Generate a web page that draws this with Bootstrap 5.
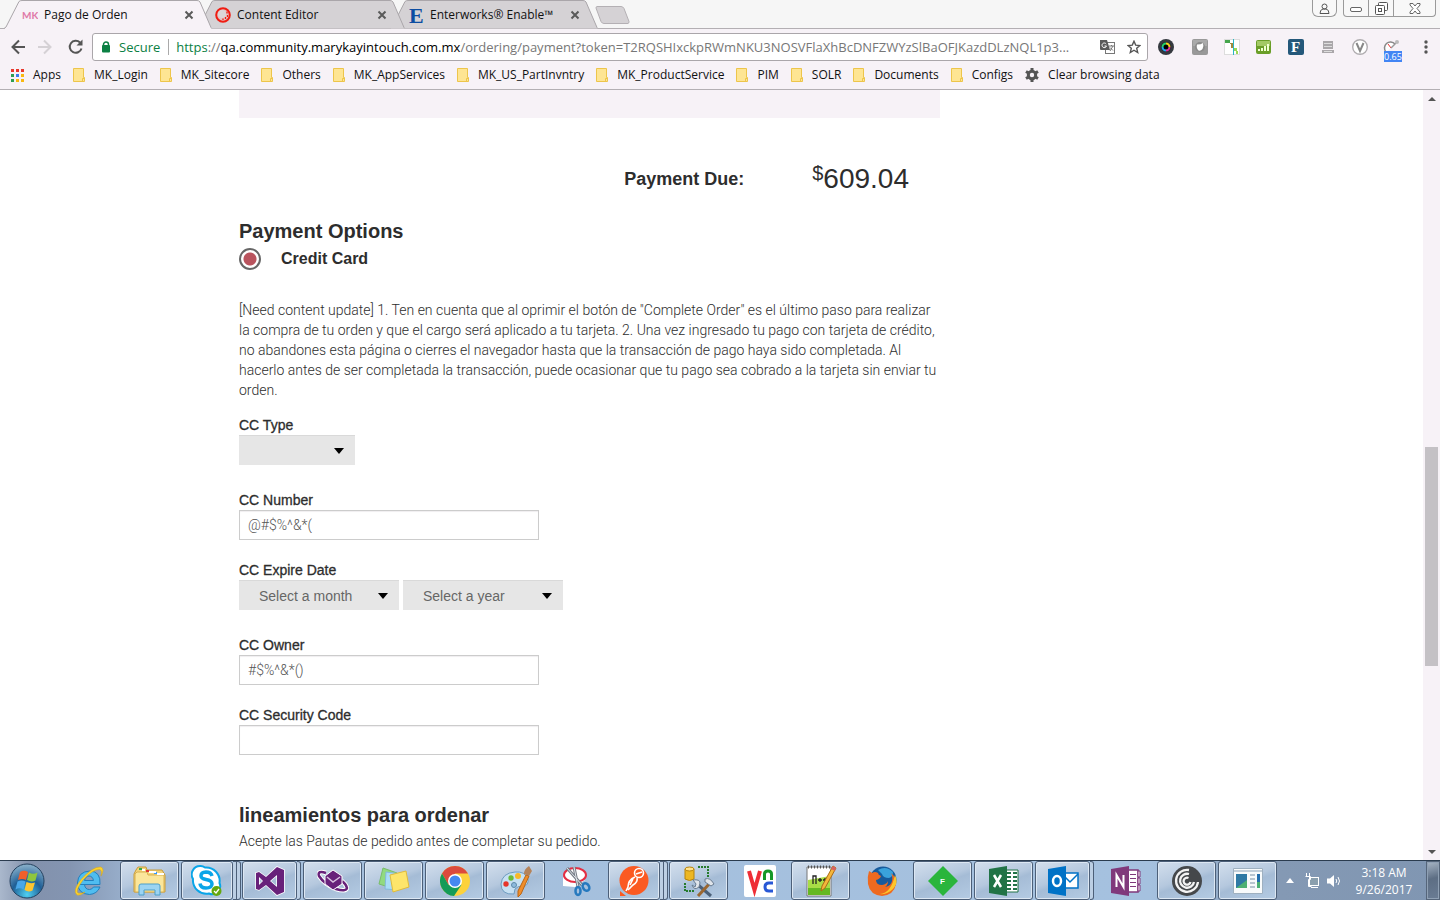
<!DOCTYPE html>
<html lang="es">
<head>
<meta charset="utf-8">
<meta name="viewport" content="width=device-width, initial-scale=1">
<title>Pago de Orden</title>
<link href="https://cdn.jsdelivr.net/npm/bootstrap@5.3.0/dist/css/bootstrap.min.css" rel="stylesheet">
<style>
:root{--tool:#f7f2f7;--line:#b3afb3;--ink:#2d2d2d}
body{font-family:"Liberation Sans",Arial,sans-serif;font-size:14px;line-height:20px;color:var(--ink);background:#fff}
.ui{font-family:"Open Sans","Noto Sans",sans-serif;font-size:12px;line-height:16px;color:#111}
.ui button,.ui a{color:inherit;text-decoration:none}
.plain{border:0;background:none;padding:0;display:flex;align-items:center;justify-content:center;color:inherit}
svg{display:block;flex:none}
/* tab strip */
.strip{background:#f6f6f6;height:29px;border-bottom:1px solid var(--line)}
.tabs{height:29px;padding-left:4px}
.tab{position:relative;width:208px;height:29px;padding:0 18px;gap:6px;margin-right:-15px}
.tab .shape{position:absolute;inset:0;width:100%;height:100%}
.tab>*:not(.shape){position:relative}
.tab.on{z-index:3}
.tab.mid{z-index:2}
.newtab{margin-left:12px}
.wbtn{height:17px;border:1px solid #9a9a9a;border-top:0;background:#f8f8f8}
.wgroup{gap:6px}
.wgroup .wbtn+.wbtn{border-left:0}
/* toolbar */
.toolbar{background:var(--tool);height:34px;padding:4px 12px 2px 9px;color:#555}
.navbtn{width:28px;height:28px}
.omni{height:28px;border:1px solid #aaa6aa;border-radius:3px;background:#fff;min-width:0;padding:0 6px 0 8px;font-size:13px;color:#777}
.omni .url{overflow:hidden;text-overflow:ellipsis;white-space:nowrap;border-left:1px solid #aaa;margin-left:8px;padding-left:7px;line-height:16px}
.secure{color:#0b8043}
.ext{width:32px;height:28px}
.speed{position:relative}
.speed span{position:absolute;left:8px;top:18px;width:18px;height:11px;background:#4285f4;color:#fff;font-size:9px;line-height:11px;text-align:center}
.bookmarks{background:var(--tool);height:27px;border-bottom:1px solid var(--line);padding:0 10px 2px;gap:12px;white-space:nowrap;overflow:hidden}
.bookmarks a{display:flex;align-items:center;gap:9px}
/* page */
.page{max-width:945px}
.order{max-width:701px}
.panel-end{height:28px;background:#f7f2f7}
.due{margin-top:41px;height:40px;padding-right:31px;gap:68px}
.due b{font-size:18px}
.amount{font-size:28px;line-height:40px}
.amount sup{font-size:20px;top:-8px;line-height:20px;vertical-align:baseline}
.page h2{font-size:20px;line-height:24px;font-weight:700;margin:0}
.choice{height:32px;gap:20px;font-size:16px;font-weight:700}
.choice input{appearance:none;width:22px;height:22px;border:2px solid #666;border-radius:50%;margin:0;background:radial-gradient(circle,#b9545e 0 6px,#fff 7px)}
.copy{font-family:Roboto,"Liberation Sans",sans-serif;font-weight:300}
.notice{margin:25px 0 15px}
.field{margin-bottom:20px}
.field.wide-gap{margin-bottom:25px}
.field label{display:block;height:20px;-webkit-text-stroke:.3px var(--ink)}
.box{display:block;width:300px;height:30px;border:1px solid #ccc;border-radius:0;padding:0 8px;color:#555;font-size:14px;box-shadow:inset 0 1px 1px #f0eef0}
.pick{appearance:none;height:30px;width:160px;border:0;border-top:1px solid #d9d9d9;border-radius:0;padding:0 26px 0 20px;color:#666;font-size:14px;background:#e6e6e6 url("data:image/svg+xml,%3Csvg xmlns='http://www.w3.org/2000/svg' width='10' height='6'%3E%3Cpath d='M0 0h10L5 6z'/%3E%3C/svg%3E") no-repeat right 11px center}
.pick.slim{width:116px}
.scroll{width:17px;background:var(--tool);flex:none}
.scroll .thumb{background:#c4c1c5;width:13px}
.scroll button{height:17px;width:16px}
/* taskbar */
.taskbar{height:40px;border-top:1px solid #2b3c4f;background:linear-gradient(90deg,#aab8cc 0,#8291ac 30px,#8495b1 70px,#a5bfdc 160px,#a5c1df 1150px,#8499b4 1280px,#8096b2)}
.orb{width:58px;padding-right:4px}
.task{width:61px;height:39px;padding:0;border:0;background:none;display:flex;align-items:stretch}
.task>span{width:59px;margin:0 0 0 1px;display:flex;align-items:center;justify-content:center;border:1px solid transparent;border-radius:3px}
.task.run>span{border-color:#4c5f78;background:linear-gradient(160deg,#d3dfed 0,#b5c8de 45%,#a5bcd6 55%,#b4cbe3);box-shadow:inset 0 0 0 1px #dce7f3}
.task.two>span{width:55px}
.task.three>span{width:52px}
.task.two::after,.task.three::after{content:"";width:4px;border:solid #4c5f78;border-width:1px 1px 1px 0;border-radius:0 3px 3px 0;background:#bccfe4}
.task.three::after{width:8px;background:linear-gradient(90deg,#bccfe4 0 3px,#4c5f78 3px 4px,#bccfe4 4px)}
.tray{color:#fff;font-size:12px;line-height:17px;padding-left:4px}
.clock{width:72px;text-align:center;color:#fff}
.desk{width:14px;border:1px solid #55657a;background:linear-gradient(165deg,#a7b5c5 0,#5d6e84 45%,#6a7c94);box-shadow:inset 0 0 0 1px #8fa0b4}
</style>
</head>
<body class="vh-100 d-flex flex-column overflow-hidden">
<svg width="0" height="0" class="position-absolute" aria-hidden="true">
  <symbol id="folder" viewBox="0 0 12 14"><path d="M.5.5h10v9h1v4H.5z" fill="#fee593" stroke="#edc54b"/><path d="M9.500 13V10.500h2" fill="none" stroke="#edc54b"/></symbol>
  <symbol id="close" viewBox="0 0 10 10"><path d="M1.500 1.500l7 7M8.500 1.500l-7 7" stroke="#5a5a5a" stroke-width="2"/></symbol>
  <symbol id="tabshape" viewBox="0 0 208 29" preserveAspectRatio="none"><path d="M0 28.500L2 27 15 1.500Q16 .5 18 .5H193Q195 .5 196 2L207 27.500l1 1" stroke="#aaa6aa"/></symbol>
</svg>

<header class="ui flex-shrink-0">
  <div class="strip d-flex justify-content-between">
    <div class="tabs d-flex" role="tablist">
      <div class="tab on d-flex align-items-center" role="tab" aria-selected="true">
        <svg class="shape" fill="#f7f2f7"><use href="#tabshape"/><path d="M1 28.500h206" stroke="#f7f2f7"/></svg>
        <svg width="16" height="16"><text x="0" y="12" font-family="Lato" font-size="10" font-weight="700" fill="#e07aa8">MK</text></svg>
        <span class="flex-grow-1">Pago de Orden</span>
        <button class="plain" aria-label="Close"><svg width="10" height="10"><use href="#close"/></svg></button>
      </div>
      <div class="tab mid d-flex align-items-center" role="tab">
        <svg class="shape" fill="#d5d2d5"><use href="#tabshape"/></svg>
        <svg width="16" height="16"><circle cx="8" cy="8" r="6.800" fill="#e3c4c4" stroke="#f01c12" stroke-width="2"/><circle cx="7" cy="7" r="4" fill="#dcd6d8"/><path d="M12 4.500v2M12.500 8v2M10.500 10v2M8 11.500v1.500" stroke="#f01c12" stroke-width="1.300"/></svg>
        <span class="flex-grow-1">Content Editor</span>
        <button class="plain" aria-label="Close"><svg width="10" height="10"><use href="#close"/></svg></button>
      </div>
      <div class="tab d-flex align-items-center" role="tab">
        <svg class="shape" fill="#d5d2d5"><use href="#tabshape"/></svg>
        <svg width="16" height="26"><text x="1" y="21" font-family="Liberation Serif" font-size="22" font-weight="700" fill="#0c4da2">E</text></svg>
        <span class="flex-grow-1">Enterworks® Enable™</span>
        <button class="plain" aria-label="Close"><svg width="10" height="10"><use href="#close"/></svg></button>
      </div>
      <button class="plain newtab" aria-label="New tab"><svg width="36" height="18"><path d="M2 .5H26q2 0 3 2l5 13q0 2-1 2H9q-2 0-3-2L1 2Q1 .5 2 .5z" fill="#d5d2d5" stroke="#b4b0b4"/></svg></button>
    </div>
    <div class="wgroup d-flex pe-1">
      <button class="plain wbtn rounded-bottom" style="width:25px" aria-label="Profile"><svg width="11" height="11" fill="none" stroke="#555"><circle cx="5.500" cy="3.500" r="2.500"/><path d="M1 10.500q0-4 3-4.500h3q3 .5 3 4.500z"/></svg></button>
      <div class="d-flex">
      <button class="plain wbtn" style="width:26px;border-bottom-left-radius:4px" aria-label="Minimize"><svg width="12" height="10"><rect x=".5" y="4.500" width="11" height="4" rx="1.500" fill="#fff" stroke="#666"/></svg></button>
      <button class="plain wbtn" style="width:25px" aria-label="Restore"><svg width="13" height="13" fill="#fff" stroke="#555"><rect x="3.500" y=".5" width="9" height="8" rx="1"/><rect x=".5" y="3.500" width="9" height="9" rx="1"/><rect x="3.500" y="6.500" width="3" height="3"/></svg></button>
      <button class="plain wbtn" style="width:42px;border-bottom-right-radius:4px" aria-label="Close window"><svg width="12" height="11"><path d="M1 .5h3l2 2.500 2-2.500h3v1.500L8 5.500l3 3.500v1.500H8L6 8l-2 2.500H1V9l3-3.500L1 2z" fill="#fff" stroke="#666"/></svg></button>
      </div>
    </div>
  </div>

  <div class="toolbar d-flex align-items-center">
    <button class="plain navbtn" style="width:18px" aria-label="Back"><svg width="16" height="16" fill="none" stroke="#555" stroke-width="2"><path d="M15 8H3M9 1.500L2.500 8 9 14.500"/></svg></button>
    <button class="plain navbtn ms-1 me-1" aria-label="Forward"><svg width="16" height="16" fill="none" stroke="#d5d1d5" stroke-width="2"><path d="M1 8H13M7 1.500L13.500 8 7 14.500"/></svg></button>
    <button class="plain navbtn me-1" style="width:25px" aria-label="Reload"><svg width="16" height="16"><path d="M13.500 9.500A6 6 0 1 1 12 3.500" fill="none" stroke="#555" stroke-width="2"/><path d="M14.500.5v6h-6z" fill="#555"/></svg></button>
    <div class="omni flex-grow-1 d-flex align-items-center">
      <svg width="10" height="12"><path d="M2.500 5V3.500a2.500 2.500 0 0 1 5 0V5" fill="none" stroke="#0b8043" stroke-width="1.500"/><rect x="1" y="4" width="8" height="7.500" rx="1" fill="#0b8043"/></svg>
      <span class="secure ms-2">Secure</span>
      <div class="url flex-grow-1" role="textbox" aria-label="Address"><span class="secure">https</span>://<span class="text-black">qa.community.marykayintouch.com.mx</span>/ordering/payment?token=T2RQSHIxckpRWmNKU3NOSVFlaXhBcDNFZWYzSlBaOFJKazdDLzNQL1p3...</div>
      <button class="plain ms-3" aria-label="Translate"><svg width="15" height="14"><rect x="5.500" y="2.500" width="9" height="11" fill="#fff" stroke="#777"/><path d="M0 0h7l3 10H1Q0 10 0 9z" fill="#5a5a5a"/><path d="M6.200 4A2.300 2.300 0 1 0 6.500 6H4.500" fill="none" stroke="#fff"/><path d="M9 6h5M11.500 5v1M10 11l3-5M10 7.500l3 3" stroke="#777" fill="none"/></svg></button>
      <button class="plain ms-2 ps-1" aria-label="Bookmark"><svg width="14" height="14"><path d="M7 1.200l1.700 3.900 4.200.4-3.200 2.800 1 4.200L7 10.200l-3.700 2.300 1-4.200L1.100 5.500l4.200-.4z" fill="none" stroke="#555" stroke-width="1.400"/></svg></button>
    </div>
    <button class="plain ext ms-1" style="width:28px" aria-label="Camera"><svg width="16" height="16"><circle cx="8" cy="8" r="8" fill="#35393f"/><circle cx="8" cy="8" r="4.800" fill="#111"/><g fill="none" stroke-width="2"><path d="M4.500 8A3.500 3.500 0 0 1 8 4.500" stroke="#26d16a"/><path d="M8 4.500A3.500 3.500 0 0 1 11.500 8" stroke="#f4d21c"/><path d="M11.500 8A3.500 3.500 0 0 1 8 11.500" stroke="#e2319a"/><path d="M8 11.500A3.500 3.500 0 0 1 4.500 8" stroke="#22a7f0"/></g><circle cx="8" cy="8" r="2" fill="#000"/></svg></button>
    <button class="plain ext ms-1" aria-label="Shield"><svg width="16" height="16"><rect width="16" height="16" rx="2" fill="#999"/><rect x="1" y="1" width="14" height="6" fill="#aaa"/><circle cx="8" cy="8" r="5" fill="#8a8a8a"/><path d="M5 5.500q4 0 6-1.500 1 3-.5 6-2 2.500-4 1.500Q4 9 5 5.500z" fill="#fff"/></svg></button>
    <button class="plain ext" aria-label="Layout"><svg width="16" height="16"><rect x=".5" y=".5" width="15" height="15" fill="#fff" stroke="#ddd"/><path d="M1 1h5v3H1z" fill="#46a64d"/><path d="M6 4h3v3h-2v-2H6zM7 7h2v2H7z" fill="#a3883a"/><path d="M9.500 0v16" stroke="#2ab6c4"/><path d="M10 9h3v3h-3zM12 12h2v3h-2z" fill="#9bd955"/></svg></button>
    <button class="plain ext" aria-label="Charts"><svg width="16" height="16"><rect y="1" width="15" height="14" rx="2" fill="#6a9e28"/><rect x="1" y="2" width="13" height="5" fill="#a3c964"/><path d="M2 10h2v2H2zM5 9h2v3H5zM8 7h2v5H8zM11 5h2v7h-2z" fill="#f0ffd0"/></svg></button>
    <button class="plain ext" aria-label="Fonts"><svg width="16" height="16"><rect width="16" height="16" rx="2" fill="#24587a"/><text x="3" y="13" font-family="Liberation Serif" font-size="15" font-weight="700" fill="#fff">F</text></svg></button>
    <button class="plain ext" aria-label="Drive"><svg width="12" height="12"><path d="M1 0h10v8H1zM0 9h12v3H0z" fill="#aaa7aa"/><path d="M2 2.500h8M2 5.500h8M2 10.500h8" stroke="#ddd"/></svg></button>
    <button class="plain ext" aria-label="V"><svg width="16" height="16"><circle cx="8" cy="8" r="7.300" fill="#fff" stroke="#b0adb0" stroke-width="1.400"/><path d="M4.500 4L8 12l3.500-8" fill="none" stroke="#888" stroke-width="2"/></svg></button>
    <button class="plain ext speed" aria-label="Page load time"><svg width="18" height="16"><path d="M3 13A6 6 0 1 1 12 5" fill="#fff" stroke="#888" stroke-width="1.500"/><path d="M8 9L5 5" stroke="#e33"/><path d="M8 9l5-5" stroke="#999" stroke-width="1.500"/><circle cx="14" cy="3" r="2" fill="#bbb"/></svg><span>0.65</span></button>
    <button class="plain ms-3" aria-label="Menu"><svg width="4" height="14" fill="#555"><circle cx="2" cy="2" r="1.700"/><circle cx="2" cy="7" r="1.700"/><circle cx="2" cy="12" r="1.700"/></svg></button>
  </div>

  <nav class="bookmarks d-flex align-items-center">
    <a href="#"><svg width="14" height="14"><path d="M1 1h3v3H1zM6 1h3v3H6zM11 1h3v3h-3z" fill="#e8382d"/><path d="M1 6h3v3H1zM1 11h3v3H1z" fill="#2e9e52"/><path d="M6 6h3v3H6z" fill="#3b7ded"/><path d="M11 6h3v3h-3zM6 11h3v3H6zM11 11h3v3h-3z" fill="#f9b80f"/></svg>Apps</a>
    <a href="#"><svg width="12" height="14"><use href="#folder"/></svg>MK_Login</a>
    <a href="#"><svg width="12" height="14"><use href="#folder"/></svg>MK_Sitecore</a>
    <a href="#"><svg width="12" height="14"><use href="#folder"/></svg>Others</a>
    <a href="#"><svg width="12" height="14"><use href="#folder"/></svg>MK_AppServices</a>
    <a href="#"><svg width="12" height="14"><use href="#folder"/></svg>MK_US_PartInvntry</a>
    <a href="#"><svg width="12" height="14"><use href="#folder"/></svg>MK_ProductService</a>
    <a href="#"><svg width="12" height="14"><use href="#folder"/></svg>PIM</a>
    <a href="#"><svg width="12" height="14"><use href="#folder"/></svg>SOLR</a>
    <a href="#"><svg width="12" height="14"><use href="#folder"/></svg>Documents</a>
    <a href="#"><svg width="12" height="14"><use href="#folder"/></svg>Configs</a>
    <a href="#"><svg width="14" height="14"><circle cx="7" cy="7" r="3.700" fill="none" stroke="#555" stroke-width="3"/><path d="M7 0v3M7 11v3M1 3.500l2.500 1.500M10.500 9l2.500 1.500M1 10.500L3.500 9M10.500 5L13 3.500" stroke="#555" stroke-width="3"/></svg>Clear browsing data</a>
  </nav>
</header>

<div class="d-flex flex-grow-1 overflow-hidden">
  <main class="flex-grow-1 overflow-hidden">
    <div class="container p-0 page">
      <form class="order">
        <div class="panel-end"></div>
        <div class="due d-flex justify-content-end align-items-center"><b>Payment Due:</b><span class="amount"><sup>$</sup>609.04</span></div>
        <h2 class="mt-3 pt-1">Payment Options</h2>
        <div class="choice d-flex align-items-center"><input type="radio" id="cc" name="method" checked><label for="cc">Credit Card</label></div>
        <p class="copy notice">[Need content update] 1. Ten en cuenta que al oprimir el botón de "Complete Order" es el último paso para realizar la compra de tu orden y que el cargo será aplicado a tu tarjeta. 2. Una vez ingresado tu pago con tarjeta de crédito, no abandones esta página o cierres el navegador hasta que la transacción de pago haya sido completada. Al hacerlo antes de ser completada la transacción, puede ocasionar que tu pago sea cobrado a la tarjeta sin enviar tu orden.</p>
        <div class="field wide-gap"><label for="type">CC Type</label><select id="type" class="pick slim d-block"><option></option></select></div>
        <div class="field"><label for="num">CC Number</label><input id="num" class="box copy" value="@#$%^&amp;*("></div>
        <div class="field wide-gap"><label for="month">CC Expire Date</label><div class="d-flex gap-1"><select id="month" class="pick"><option>Select a month</option></select><select class="pick" aria-label="Year"><option>Select a year</option></select></div></div>
        <div class="field"><label for="owner">CC Owner</label><input id="owner" class="box copy" value="#$%^&amp;*()"></div>
        <div class="field mb-0"><label for="code">CC Security Code</label><input id="code" class="box copy"></div>
        <h2 class="mt-5">lineamientos para ordenar</h2>
        <p class="copy mt-1">Acepte las Pautas de pedido antes de completar su pedido.</p>
      </form>
    </div>
  </main>
  <div class="scroll d-flex flex-column align-items-center">
    <button class="plain" aria-label="Scroll up"><svg width="8" height="4"><path d="M0 4h8L4 0z" fill="#555"/></svg></button>
    <div style="flex:340"></div><div class="thumb" style="flex:219"></div><div style="flex:177"></div>
    <button class="plain" aria-label="Scroll down"><svg width="8" height="4"><path d="M0 0h8L4 4z" fill="#555"/></svg></button>
  </div>
</div>

<footer class="taskbar ui d-flex flex-shrink-0">
  <button class="plain orb" aria-label="Start"><svg width="36" height="36" viewBox="0 0 36 36"><defs><radialGradient id="o" cx=".5" cy=".9" r=".9"><stop offset="0" stop-color="#4fd0f2"/><stop offset=".5" stop-color="#1f5f96"/><stop offset="1" stop-color="#8db3cc"/></radialGradient></defs><circle cx="18" cy="18" r="17" fill="url(#o)" stroke="#24415f"/><path d="M11 9q4-2.500 8 0l-2 8q-4-2-8 0z" fill="#f1602a"/><path d="M20 9.500q4 2.500 8.500 0l-2 8q-4 2-8.500-.5z" fill="#8fc63f"/><path d="M8.500 18.500q4-2 8 0l-2 8q-4-2.500-8 0z" fill="#4aa7e8"/><path d="M17.500 19q4 2 8.500.5l-2.500 8q-4 2-8-.5z" fill="#fdc52f"/></svg></button>
  <button class="task" aria-label="Internet Explorer"><span><svg width="32" height="32" viewBox="0 0 32 32"><path d="M6 19.500h21q1-13-10-13.500Q5 6.500 4.500 18 5 29 16.500 29.500 24 29 27 22h-6.500q-1.500 2.500-4 2.500-4.500 0-5-5M11.500 15.500q1-4.500 4.500-4.500t4.500 4.500z" fill="#4fbdf0" stroke="#2480bd" fill-rule="evenodd"/><path d="M4 30Q-1 26 8 14.500 20 1 28 2q4 2 0 9 1.500-6-1.500-6.500Q20 4 10 15 2 26 5 28q3 1 7-1-5 4-8 3z" fill="#fbd32e" stroke="#d9a512" stroke-width=".5"/></svg></span></button>
  <button class="task run" aria-label="Explorer"><span><svg width="34" height="30" viewBox="0 0 34 30"><path d="M3 4l2-3h8l1 3h15l3 5v17H1V8z" fill="#f3d37a" stroke="#c79b3b"/><path d="M4 6h10l1 3h16v17H2V8z" fill="#fbe69b" stroke="#d8b050"/><path d="M6 2h3v2H6z" fill="#3aa94a"/><path d="M13 4h3v2h-3z" fill="#d33"/><path d="M21 6h3v2h-3z" fill="#39f"/><path d="M9 3h3v2H9zM16 5h7v2h-7zM24 7h7v2h-7z" fill="#fff"/><path d="M6 29V20q0-2 2-2h17q2 0 2 2v9h-5v-5H11v5z" fill="#9cd4f2" stroke="#4d9fc9"/></svg></span></button>
  <button class="task run three" aria-label="Skype"><span><svg width="32" height="32" viewBox="0 0 32 32"><path d="M9 1a8 8 0 0 1 5 1.500A13.500 13.500 0 0 1 28.500 18 8 8 0 0 1 18 28.500 13.500 13.500 0 0 1 2 14 8.500 8.500 0 0 1 9 1z" fill="#fff" stroke="#0aa5e8" stroke-width="2"/><path d="M21 11q-1-4-6-4-5 .3-5 3.800 0 2.800 5 3.700 6 1 6 4.500-.2 4-6 4-5.500 0-6-4.500" fill="none" stroke="#0aa5e8" stroke-width="3.500"/><circle cx="25.500" cy="26" r="5" fill="#64a80f"/><path d="M23 26l2 2 3-4" stroke="#fff" stroke-width="1.300" fill="none"/></svg></span></button>
  <button class="task run two" aria-label="Visual Studio"><span><svg width="32" height="32" viewBox="0 0 32 32"><path d="M2 8l3-1 7 5L23 2l7 3v22l-7 3-11-10-7 5-3-1zm3 4v8l4-4zm18-2l-7 6 7 6z" fill="#68217a" stroke="#fff" stroke-width="1.500" fill-rule="evenodd" paint-order="stroke"/></svg></span></button>
  <button class="task run" aria-label="Cube"><span><svg width="32" height="32" viewBox="0 0 32 32"><path d="M9 8q-9-3-7 3 5 8 17 13 10 3 11-1-1-4-5-7" fill="none" stroke="#fff" stroke-width="4.500"/><path d="M9 8q-9-3-7 3 5 8 17 13 10 3 11-1-1-4-5-7" fill="none" stroke="#68217a" stroke-width="2.500"/><path d="M8 11l8-6 9 6v8l-9 6-8-6z" fill="#68217a" stroke="#fff"/><path d="M10 12l6 5 7-5" fill="none" stroke="#d8c1df" stroke-width="1.500"/></svg></span></button>
  <button class="task run" aria-label="Sticky Notes"><span><svg width="32" height="28" viewBox="0 0 32 28"><path d="M5 1l14 5-5 15-13-4z" fill="#91da80" stroke="#79bd6b"/><path d="M8 5l15 2-2 16-14-1z" fill="#a9dcf7" stroke="#83b9db"/><path d="M12 8l16-4 3 16-16 5z" fill="#fde56b" stroke="#e0bb3b"/></svg></span></button>
  <button class="task run" aria-label="Chrome"><span><svg width="30" height="30" viewBox="0 0 30 30"><circle cx="15" cy="15" r="15" fill="#fdd23c"/><path d="M15 0A15 15 0 0 1 28 7.500H15L8.500 18.700 2 7.500A15 15 0 0 1 15 0z" fill="#dc4a3d"/><path d="M2 7.500A15 15 0 0 0 14 30l7.500-11.300H8.500z" fill="#149b58"/><circle cx="15" cy="15" r="7" fill="#fff"/><circle cx="15" cy="15" r="5.500" fill="#4688f1"/></svg></span></button>
  <button class="task run" aria-label="Paint"><span><svg width="32" height="32" viewBox="0 0 32 32"><path d="M15 7Q2 8 1 19q0 11 13 10l1-5q3-4 8-2 6-2 5-8-3-8-13-7z" fill="#c6e0f2" stroke="#6e9cc0"/><circle cx="6" cy="19" r="2.700" fill="#e6352b"/><circle cx="11" cy="13" r="2.700" fill="#6aba3a"/><circle cx="18" cy="11" r="3" fill="#f9b827"/><circle cx="14" cy="20" r="2.500" fill="#8dbbdd" stroke="#5e8aaa"/><path d="M26 10l3 1-8 18-3 3v-6z" fill="#ef8e2b" stroke="#b96515"/><path d="M24 9q0-5 5-8l3 5-3 5z" fill="#b5835a"/></svg></span></button>
  <button class="task" aria-label="Snipping Tool"><span><svg width="32" height="32" viewBox="0 0 32 32"><path d="M2 12v9l12 1 10-7z" fill="#fff"/><ellipse cx="14" cy="10" rx="11" ry="7" fill="#fff" stroke="#e52e42" stroke-width="2"/><path d="M6 3l15 17M13 2l4 20" stroke="#777e87" stroke-width="3"/><path d="M6 3l15 17M13 2l4 20" stroke="#dfe4e8"/><g fill="none" stroke="#2679be" stroke-width="2.500"><ellipse cx="17" cy="26" rx="2.500" ry="4"/><ellipse cx="25" cy="22" rx="3" ry="4" transform="rotate(-35 25 22)"/></g></svg></span></button>
  <button class="task run three" aria-label="Postman"><span><svg width="32" height="32" viewBox="0 0 32 32"><circle cx="16" cy="15.500" r="14.500" fill="#fb5a22"/><path d="M2 26v5h6z" fill="#fb5a22"/><circle cx="21" cy="8" r="4.500" fill="none" stroke="#fff" stroke-width="1.600"/><path d="M18 9l6-2" stroke="#fff" stroke-width="1.600"/><path d="M17 12q-7 3-7 10l-2 4M19 13q1 4-4 7l-5 5M15 14l-3 6" fill="none" stroke="#fff" stroke-width="1.600"/></svg></span></button>
  <button class="task run" aria-label="SQL Tools"><span><svg width="32" height="34" viewBox="0 0 32 34"><path d="M2 5v10q4.500 3 9 0V5z" fill="#edb723" stroke="#b78309"/><ellipse cx="6.500" cy="5" rx="4.500" ry="2" fill="#ffe18b" stroke="#b78309"/><path d="M15 3h10v10M2 19v8h9" fill="none" stroke="#267b2d" stroke-width="2" stroke-dasharray="2 1"/><path d="M14 20l14 12" stroke="#4b6078" stroke-width="3"/><path d="M28 18L15 32" stroke="#9b6731" stroke-width="3"/><path d="M10 16l3 4-1 3-3-2q2 6 7 2l1-4q0-4-7-3zM22 15q5-2 9 5l-3 2-6-4z" fill="#dfe4ea" stroke="#697c91"/></svg></span></button>
  <button class="task" aria-label="VNC"><span><svg width="32" height="32" viewBox="0 0 32 32"><rect width="32" height="32" rx="2" fill="#fff"/><path d="M5 6l5.500 19L16 6" fill="none" stroke="#ee2e36" stroke-width="4"/><path d="M20.500 15V9q0-3 3.500-3t3.500 3v6" fill="none" stroke="#159827" stroke-width="3"/><path d="M29 18h-4q-4 0-4 4t4 4h4" fill="none" stroke="#2757d6" stroke-width="3"/></svg></span></button>
  <button class="task run" aria-label="Notepad++"><span><svg width="32" height="34" viewBox="0 0 32 34"><path d="M2 3h24v29H2z" fill="#fff" stroke="#777"/><path d="M3 16l22-4v19H3z" fill="#a8dc46"/><path d="M3 24h22v7H3z" fill="#65b823"/><path d="M3 3h22" stroke="#555" stroke-width="3" stroke-dasharray="1 2"/><path d="M8 20v-8h3v8M13 16h4M15 14v4M18 16h4M20 14v4" fill="none" stroke="#222" stroke-width="1.300"/><path d="M28 2l3 2-11 20-4 3 1-5z" fill="#f4b63b" stroke="#ad6b16"/><path d="M28 2l3 2-1 3-4-2z" fill="#d96262"/></svg></span></button>
  <button class="task" aria-label="Firefox"><span><svg width="30" height="30" viewBox="0 0 30 30"><circle cx="16" cy="14" r="13.500" fill="#175a9c"/><path d="M11 4q8-5 15 2 0 5-4 6-6 0-7-4z" fill="#3aa2dc"/><path d="M2 5q2 1 3 2 3-2 6 0 0 2 3 3-1 3-5 4 0 5 6 5 5-1 6-4 0 4-3 6 6-1 7-6 1-5-1-8 6 5 5 11Q27 29 15 30 3 29 1 18q-1-7 1-13z" fill="#ee6a20"/><path d="M28 9q4 8-2 14-6 6-13 5Q24 27 28 9z" fill="#fcc72c"/></svg></span></button>
  <button class="task run" aria-label="F"><span><svg width="32" height="32" viewBox="0 0 32 32"><path d="M16 1l15 15-15 15L1 16z" fill="#2ab53c"/><text x="13" y="19" font-size="8" font-weight="700" fill="#fff" font-family="Liberation Sans">F</text></svg></span></button>
  <button class="task run" aria-label="Excel"><span><svg width="32" height="32" viewBox="0 0 32 32"><path d="M17 5h13v22H17z" fill="#fff" stroke="#217346"/><path d="M19 8h4M25 8h4M19 12h4M25 12h4M19 16h4M25 16h4M19 20h4M25 20h4M19 24h4M25 24h4" stroke="#217346" stroke-width="2"/><path d="M1 4l18-3v30L1 28z" fill="#217346"/><path d="M6 10l7 12M13 10L6 22" stroke="#fff" stroke-width="2.500"/></svg></span></button>
  <button class="task run two" aria-label="Outlook"><span><svg width="32" height="32" viewBox="0 0 32 32"><path d="M17 8h14v15H17z" fill="#fff" stroke="#0072c6" stroke-width="1.500"/><path d="M18 12l5 5 8-8" fill="none" stroke="#0072c6" stroke-width="1.500"/><path d="M1 4l18-3v30L1 28z" fill="#0072c6"/><ellipse cx="10" cy="16" rx="4" ry="5" fill="none" stroke="#fff" stroke-width="2.500"/></svg></span></button>
  <button class="task" aria-label="OneNote"><span><svg width="32" height="32" viewBox="0 0 32 32"><path d="M17 5h11v22H17z" fill="#fff" stroke="#80397b" stroke-width="1.500"/><path d="M28 6h2v6h-2zM28 13h2v6h-2zM28 20h2v6h-2z" fill="#fff" stroke="#80397b"/><path d="M20 9.500h6M20 13.500h6M20 17.500h6M20 21.500h6" stroke="#80397b"/><path d="M1 4l18-3v30L1 28z" fill="#80397b"/><path d="M6.500 22V10l7 12V10" fill="none" stroke="#fff" stroke-width="2"/></svg></span></button>
  <button class="task run" aria-label="Receiver"><span><svg width="32" height="32" viewBox="0 0 32 32"><circle cx="16" cy="16" r="15" fill="#45484b"/><g fill="none" stroke="#f3f3f3" stroke-width="2.300"><path d="M18 5A11 11 0 1 0 27 17"/><path d="M18 9A7 7 0 1 0 23 17"/><path d="M17.500 13A3.500 3.500 0 1 0 19.500 17"/></g></svg></span></button>
  <button class="task run" aria-label="Window"><span><svg width="30" height="26" viewBox="0 0 30 26"><path d="M.5.500h29v25H.5z" fill="#f8fafb" stroke="#9eb0c0"/><path d="M1 3h28" stroke="#c2ced9" stroke-width="2"/><path d="M3 6h11v14H3z" fill="#2f79a5"/><path d="M3 20l11-8v8z" fill="#4db074"/><path d="M17 7h5M17 11h5M17 15h5M17 19h5" stroke="#b8c5d0" stroke-width="2"/><path d="M24 6h3v8h-3z" fill="#246fae"/><path d="M24 14h3v6h-3z" fill="#4db074"/></svg></span></button>
  <div class="tray d-flex align-items-center flex-grow-1 justify-content-between">
    <button class="plain ms-1" aria-label="Show hidden icons"><svg width="8" height="5"><path d="M0 5h8L4 0z" fill="#fff"/></svg></button>
    <button class="plain ms-1" aria-label="Network"><svg width="16" height="16" fill="none" stroke="#fff"><rect x="5.500" y="4.500" width="9" height="8" fill="#8a9fae"/><path d="M7 14.500h7M2.500 0v3M5.500 0v3M1.500 3.500h5v3h-2v7h3"/></svg></button>
    <button class="plain" aria-label="Volume"><svg width="16" height="14"><path d="M1 4.500h3L8 1v12L4 9.500H1z" fill="#fff"/><path d="M10 5q1.500 2 0 4M12 3q3 4 0 8" fill="none" stroke="#fff"/></svg></button>
    <div class="clock">3:18 AM<br>9/26/2017</div>
    <button class="desk align-self-stretch p-0" aria-label="Show desktop"></button>
  </div>
</footer>
<script src="https://cdn.jsdelivr.net/npm/bootstrap@5.3.0/dist/js/bootstrap.bundle.min.js"></script>
</body>
</html>
